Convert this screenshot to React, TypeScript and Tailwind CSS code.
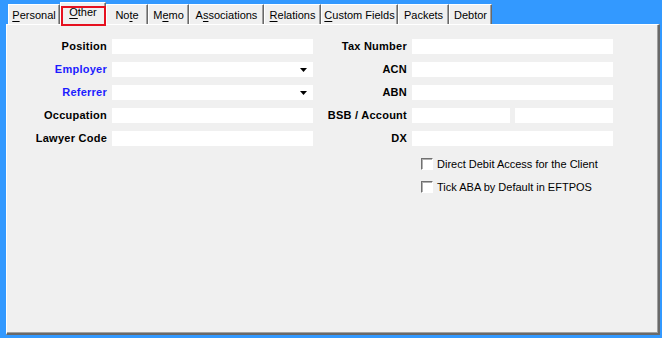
import React from "react";

type Tab = { pre: string; key: string; post: string; w: string };

const tabs: Tab[] = [
  { pre: "", key: "P", post: "ersonal", w: "w-[52px]" },
  { pre: "", key: "O", post: "ther", w: "w-[46px]" },
  { pre: "No", key: "t", post: "e", w: "w-[42px]" },
  { pre: "M", key: "e", post: "mo", w: "w-[41px]" },
  { pre: "A", key: "s", post: "sociations", w: "w-[75px]" },
  { pre: "", key: "R", post: "elations", w: "w-[57px]" },
  { pre: "", key: "C", post: "ustom Fields", w: "w-[77px]" },
  { pre: "Packets", key: "", post: "", w: "w-[51px]" },
  { pre: "Debtor", key: "", post: "", w: "w-[43px]" },
];

const font = { fontFamily: '"Liberation Sans", Arial, sans-serif' };

function TabItem({ tab, active }: { tab: Tab; active: boolean }) {
  return (
    <div
      className={`${tab.w} relative flex items-center justify-center border-t border-l border-white bg-[#f0f0f0] text-[11px] text-black shadow-[inset_-1px_0_0_#a0a0a0] border-r border-r-[#696969] ${
        active ? "z-10 -mb-px h-[23px] pb-[3px]" : "h-[20px] pt-px"
      }`}
    >
      <span>
        {tab.pre}
        {tab.key && <span className="underline underline-offset-[2px]">{tab.key}</span>}
        {tab.post}
      </span>
      {active && (
        <div className="absolute left-0 top-[3px] h-[20px] w-[45px] border-[2.5px] border-[#e6101f]" />
      )}
    </div>
  );
}

function Field({ w = "w-[201px]", dropdown = false }: { w?: string; dropdown?: boolean }) {
  return (
    <div className={`${w} relative h-[15px] bg-white`}>
      {dropdown && (
        <svg
          className="absolute right-[6px] top-[6px]"
          width="7"
          height="4"
          viewBox="0 0 7 4"
        >
          <path d="M0 0H7L3.5 4Z" fill="#000" />
        </svg>
      )}
    </div>
  );
}

function Row({
  label,
  labelW,
  blue = false,
  children,
}: {
  label: string;
  labelW: string;
  blue?: boolean;
  children: React.ReactNode;
}) {
  return (
    <div className="flex h-[15px] items-center">
      <div
        className={`${labelW} pr-[5px] text-right text-[11px] font-bold tracking-[0.25px] ${
          blue ? "text-[#1c1cff]" : "text-black"
        }`}
      >
        {label}
      </div>
      {children}
    </div>
  );
}

function Check({ label }: { label: string }) {
  return (
    <div className="flex h-[12px] items-center">
      <div className="h-[12px] w-[12px] border-t border-l border-[#707070] border-r border-b border-r-white border-b-white bg-white shadow-[inset_1px_1px_0_#b0b0b0]" />
      <span className="ml-[4px] text-[11px] text-black">{label}</span>
    </div>
  );
}

export default function App() {
  return (
    <div className="h-[338px] w-[662px] overflow-hidden bg-[#3399ff] pt-[2px]" style={font}>
      <div className="flex h-[22px] items-end pl-[8px]">
        {tabs.map((t, i) => (
          <TabItem key={i} tab={t} active={i === 1} />
        ))}
      </div>

      <div className="ml-[6px] h-[311px] w-[654px] border-t border-l border-white border-r-2 border-b-2 border-r-[#696969] border-b-[#696969] bg-[#f0f0f0] shadow-[inset_-1px_-1px_0_#a0a0a0]">
        <div className="flex pt-[14px]">
          {/* left column */}
          <div className="flex flex-col gap-[8px]">
            <Row label="Position" labelW="w-[105px]">
              <Field />
            </Row>
            <Row label="Employer" labelW="w-[105px]" blue>
              <Field dropdown />
            </Row>
            <Row label="Referrer" labelW="w-[105px]" blue>
              <Field dropdown />
            </Row>
            <Row label="Occupation" labelW="w-[105px]">
              <Field />
            </Row>
            <Row label="Lawyer Code" labelW="w-[105px]">
              <Field />
            </Row>
          </div>

          {/* right column */}
          <div className="flex flex-col gap-[8px]">
            <Row label="Tax Number" labelW="w-[99px]">
              <Field />
            </Row>
            <Row label="ACN" labelW="w-[99px]">
              <Field />
            </Row>
            <Row label="ABN" labelW="w-[99px]">
              <Field />
            </Row>
            <Row label="BSB / Account" labelW="w-[99px]">
              <Field w="w-[98px]" />
              <div className="w-[5px]" />
              <Field w="w-[98px]" />
            </Row>
            <Row label="DX" labelW="w-[99px]">
              <Field />
            </Row>
            <div className="ml-[108px] mt-[4px] flex flex-col gap-[11px]">
              <Check label="Direct Debit Access for the Client" />
              <Check label="Tick ABA by Default in EFTPOS" />
            </div>
          </div>
        </div>
      </div>
    </div>
  );
}
